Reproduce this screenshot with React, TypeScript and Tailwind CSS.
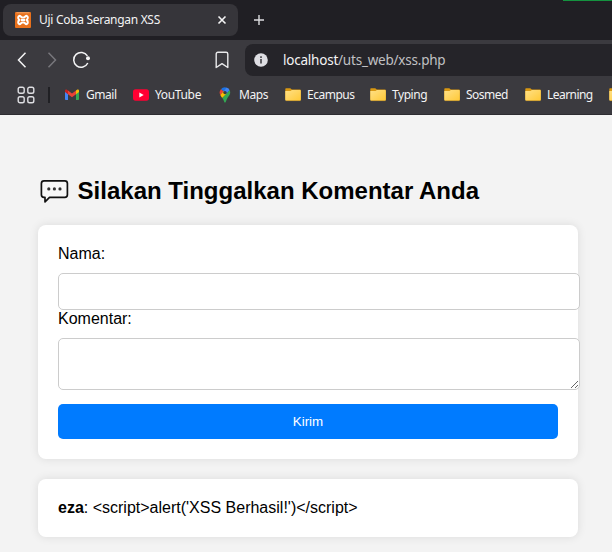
import React from "react";

function XamppIcon() {
  return (
    <svg width="16" height="16" viewBox="0 0 16 16" className="shrink-0">
      <rect width="16" height="16" rx="1" fill="#e9711c" />
      <path d="M1.5 .8h13" stroke="#f6b17c" strokeWidth=".8" />
      <path
        d="M5.200 3.900C2.900 3.500 2.400 6.900 4.500 8 2.400 9.100 2.900 12.500 5.200 12.100L6.900 10.600H9.100L10.800 12.100C13.100 12.500 13.600 9.100 11.500 8 13.600 6.900 13.100 3.500 10.800 3.900L9.100 5.400H6.900ZM6 8H10"
        fill="none"
        stroke="#fff"
        strokeWidth="2"
        strokeLinejoin="round"
      />
    </svg>
  );
}

function GmailIcon() {
  return (
    <svg width="16" height="16" viewBox="0 0 16 16">
      <path d="M1 4v8.200c0 .5.400.800.800.800H4V6.500z" fill="#4285f4" />
      <path d="M15 4v8.200c0 .5-.4.800-.8.800H12V6.500z" fill="#34a853" />
      <path d="M12 3.500v3.800l3-2.300V3.800c0-1.200-1.200-1.600-2-1z" fill="#fbbc04" />
      <path d="M1 3.800V5l3 2.300V3.500L3 2.800c-.8-.6-2-.2-2 1z" fill="#c5221f" />
      <path d="M4 3.500v3.800l4 3 4-3V3.500l-4 3z" fill="#ea4335" />
    </svg>
  );
}

function YouTubeIcon() {
  return (
    <svg width="16" height="16" viewBox="0 0 16 16">
      <rect x="0" y="2.300" width="16" height="11.400" rx="2.600" fill="#ff0033" />
      <path d="M6.300 5.500 10.700 8l-4.400 2.500z" fill="#fff" />
    </svg>
  );
}

function MapsIcon() {
  return (
    <svg width="16" height="16" viewBox="0 0 16 16">
      <path d="M8 .3a5.300 5.300 0 0 0-4.100 1.900l3 2.500L10 1z" fill="#1a73e8" />
      <path d="M3.900 2.200A5.300 5.300 0 0 0 3.300 8L6.800 4.600z" fill="#ea4335" />
      <path d="M9.600.6a5.300 5.300 0 0 1 3.100 2.700L9.400 7 6.700 4.500z" fill="#4285f4" />
      <path d="M3.300 8c.4.900 1.200 1.900 2 2.900L9.500 6.900 6.600 4.300z" fill="#fbbc04" />
      <path d="M12.700 3.300c1.900 4-1.800 6.200-3 9.300-.6 1.400-.8 3.100-1.700 3.100s-1.100-1.700-1.700-3.100a8 8 0 0 0-1-1.700z" fill="#34a853" />
      <circle cx="8" cy="5.600" r="1.700" fill="#3b3a3f" />
    </svg>
  );
}

function FolderIcon() {
  return (
    <svg width="16" height="16" viewBox="0 0 16 16">
      <defs>
        <linearGradient id="folder-face" x1="0" y1="0" x2="1" y2="1">
          <stop offset="0" stopColor="#ffe087" />
          <stop offset="1" stopColor="#ffc936" />
        </linearGradient>
      </defs>
      <path d="M.3 2.300c0-.6.400-1 1-1h4l1.500 1.200H15c.5 0 .8.300.8.800v9.400H.3z" fill="#d99812" />
      <path d="M.3 4h5.200l1.400-1H15c.5 0 .8.300.8.800v8.900c0 .6-.4 1-1 1H1.300c-.6 0-1-.4-1-1z" fill="url(#folder-face)" />
      <path d="M1 13.600h14.300" stroke="#d8a12a" strokeWidth=".6" />
    </svg>
  );
}

const bookmarks = [
  { label: "Gmail", Icon: GmailIcon, size: "w-[69px]", track: "tracking-[-0.45px]" },
  { label: "YouTube", Icon: YouTubeIcon, size: "w-[84px]", track: "tracking-[-0.35px]" },
  { label: "Maps", Icon: MapsIcon, size: "w-[68px]", track: "tracking-[-0.45px]" },
  { label: "Ecampus", Icon: FolderIcon, size: "w-[85px]", track: "tracking-[-0.5px]" },
  { label: "Typing", Icon: FolderIcon, size: "w-[74px]", track: "tracking-[-0.45px]" },
  { label: "Sosmed", Icon: FolderIcon, size: "w-[81px]", track: "tracking-[-0.5px]" },
  { label: "Learning", Icon: FolderIcon, size: "w-[84px]", track: "tracking-[-0.55px]" },
  { label: "", Icon: FolderIcon, size: "w-[16px]", track: "" },
];

function TabStrip() {
  return (
    <div className="flex h-10 items-center bg-[#201f24] pl-[3px]">
      <div className="flex h-8 w-[235px] items-center rounded-[8px] bg-[#36353a] pl-3 pr-[10px]">
        <XamppIcon />
        <span className="ml-2 flex-1 whitespace-nowrap text-[12px] tracking-[-0.3px] text-[#f3f3f4]">
          Uji Coba Serangan XSS
        </span>
        <svg width="12" height="12" viewBox="0 0 12 12" fill="none" stroke="#f4f4f5" strokeWidth="1.600">
          <path d="m2.500 2.500 7 7m0-7-7 7" />
        </svg>
      </div>
      <svg className="ml-[15px]" width="12" height="12" viewBox="0 0 12 12" fill="none" stroke="#dddde0" strokeWidth="1.400">
        <path d="M6 1v10M1 6h10" />
      </svg>
      <div className="ml-auto h-px w-[49px] self-start bg-[#14923f]" />
    </div>
  );
}

function AddressRow() {
  return (
    <div className="flex h-10 items-center">
      <svg className="ml-[14px]" width="16" height="16" viewBox="0 0 16 16" fill="none" stroke="#f4f4f5" strokeWidth="1.500">
        <path d="M11.500 .8 4.500 8l7 7.200" />
      </svg>
      <svg className="ml-[14px]" width="16" height="16" viewBox="0 0 16 16" fill="none" stroke="#78777c" strokeWidth="1.500">
        <path d="m4.500 .8 7 7.200-7 7.200" />
      </svg>
      <svg className="ml-[12px]" width="20" height="18" viewBox="0 0 20 18" fill="none" stroke="#f4f4f5" strokeWidth="1.500">
        <path d="M15.400 4.900A7.400 7.400 0 1 0 15.800 12" />
        <circle cx="16" cy="7.200" r="2" fill="#f4f4f5" stroke="none" />
      </svg>
      <svg className="ml-[123px]" width="14" height="18" viewBox="0 0 14 18" fill="none" stroke="#e9e9eb" strokeWidth="1.400" strokeLinejoin="round">
        <path d="M1.200 3c0-1 .7-1.700 1.700-1.700h8.200c1 0 1.700.7 1.700 1.700v13.500L7 12.700l-5.800 3.800z" />
      </svg>
      <div className="ml-4 flex h-8 flex-1 items-center rounded-l-[8px] bg-[#252429] pl-[9px]">
        <svg width="14" height="14" viewBox="0 0 14 14">
          <circle cx="7" cy="7" r="6.800" fill="#dedee3" />
          <path d="M7 6v4.500M7 3.300v1.600" stroke="#36353a" strokeWidth="1.500" />
        </svg>
        <span className="ml-[15px] whitespace-nowrap text-[13.5px] tracking-[-0.22px] text-[#c0c0c3]">
          <span className="text-[#f3f3f4]">localhost</span>/uts_web/xss.php
        </span>
      </div>
    </div>
  );
}

function BookmarkBar() {
  return (
    <div className="flex h-[35px] items-center overflow-hidden border-b border-[#2d2c31] pb-[5px] pl-[17px]">
      <svg className="shrink-0" width="18" height="18" viewBox="0 0 18 18" fill="none" stroke="#dedee2" strokeWidth="1.400">
        <rect x="1.200" y="1.200" width="6" height="6" rx="1.800" />
        <rect x="10.800" y="1.200" width="6" height="6" rx="1.800" />
        <rect x="1.200" y="10.800" width="6" height="6" rx="1.800" />
        <rect x="10.800" y="10.800" width="6" height="6" rx="1.800" />
      </svg>
      <div className="ml-[13px] mr-[14px] h-4 w-[2px] shrink-0 bg-[#202024]" />
      {bookmarks.map(({ label, Icon, size, track }, i) => (
        <div key={i} className={`flex shrink-0 items-center gap-[6px] ${size}`}>
          <span className="w-4 shrink-0">
            <Icon />
          </span>
          <span className={`whitespace-nowrap text-[12px] leading-4 text-[#f3f3f4] ${track}`}>{label}</span>
        </div>
      ))}
    </div>
  );
}

function CommentIcon() {
  return (
    <svg className="mt-[2px]" width="30" height="26" viewBox="0 0 30 26" fill="none">
      <path
        d="M4 1.800h20.800c1.600 0 2.600 1 2.600 2.600v11.400c0 1.600-1 2.600-2.600 2.600H9.500l-4.500 4.500v-4.500H4c-1.600 0-2.600-1-2.600-2.600V4.400c0-1.600 1-2.600 2.600-2.600z"
        fill="#f7f7f7"
        stroke="#111"
        strokeWidth="1.700"
        strokeLinejoin="round"
      />
      <g fill="#333">
        <circle cx="8.800" cy="9.900" r="1.600" />
        <circle cx="14.400" cy="9.900" r="1.600" />
        <circle cx="20" cy="9.900" r="1.600" />
      </g>
    </svg>
  );
}

export default function App() {
  return (
    <div className="h-[552px] w-[612px] overflow-hidden bg-[#f3f3f3]">
      <header className="bg-[#3b3a3f] font-['Noto_Sans',sans-serif]">
        <TabStrip />
        <AddressRow />
        <BookmarkBar />
      </header>
      <main className="w-[578px] pl-[38px] pt-[61px] font-['Liberation_Sans',Arial,sans-serif] text-[16px] text-black">
        <h2 className="mb-[19px] flex h-[30px] items-center pl-[2px] text-[24px] font-bold leading-[30px]">
          <CommentIcon />
          <span className="ml-[7.6px] whitespace-nowrap">Silakan Tinggalkan Komentar Anda</span>
        </h2>
        <form
          className="h-[234px] rounded-[8px] bg-white p-5 shadow-[0_0_10px_rgba(0,0,0,0.1)]"
          onSubmit={(e) => e.preventDefault()}
        >
          <label htmlFor="nama" className="block h-7 leading-[18px]">Nama:</label>
          <input id="nama" className="block h-[37px] w-[522px] rounded-[5px] border border-[#ccc] bg-white p-[10px] text-[13.333px] outline-none" />
          <label htmlFor="komentar" className="block h-7 leading-[18px]">Komentar:</label>
          <textarea id="komentar" className="block h-[52px] w-[522px] resize rounded-[5px] border border-[#ccc] bg-white p-[10px] text-[13.333px] outline-none" />
          <button className="mt-[14px] block h-[35px] w-full rounded-[5px] bg-[#007bff] text-[13.333px] leading-[15px] text-white">
            Kirim
          </button>
        </form>
        <div className="mt-5 h-[58px] rounded-[8px] bg-white px-5 pt-5 leading-[18px] shadow-[0_0_10px_rgba(0,0,0,0.1)]">
          <strong className="font-bold">eza</strong>
          {": <script>alert('XSS Berhasil!')</script>"}
        </div>
      </main>
    </div>
  );
}
